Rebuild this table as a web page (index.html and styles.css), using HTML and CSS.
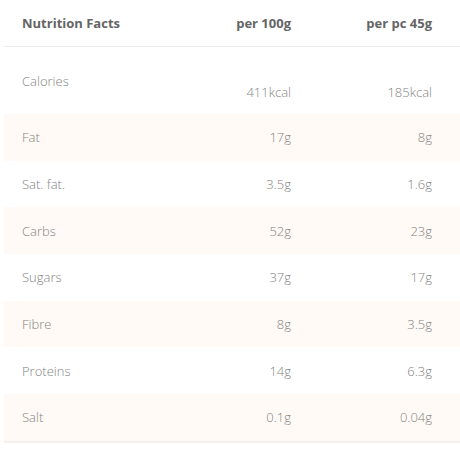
FILE: index.html
```html
<!DOCTYPE html>
<html>
<head>
<meta charset="utf-8">
<link rel="stylesheet" href="styles.css">
</head>
<body>
<div class="table">
  <div class="row head">
    <div class="label">Nutrition Facts</div>
    <div class="val">per 100g</div>
    <div class="val">per pc 45g</div>
  </div>
  <div class="row cal">
    <div class="label">Calories</div>
    <div class="val">411kcal</div>
    <div class="val">185kcal</div>
  </div>
  <div class="row alt"><div class="label">Fat</div><div class="val">17g</div><div class="val">8g</div></div>
  <div class="row"><div class="label">Sat. fat.</div><div class="val">3.5g</div><div class="val">1.6g</div></div>
  <div class="row alt"><div class="label">Carbs</div><div class="val">52g</div><div class="val">23g</div></div>
  <div class="row"><div class="label">Sugars</div><div class="val">37g</div><div class="val">17g</div></div>
  <div class="row alt"><div class="label">Fibre</div><div class="val">8g</div><div class="val">3.5g</div></div>
  <div class="row"><div class="label">Proteins</div><div class="val">14g</div><div class="val">6.3g</div></div>
  <div class="row alt last"><div class="label">Salt</div><div class="val">0.1g</div><div class="val">0.04g</div></div>
</div>
</body>
</html>
```
FILE: styles.css
```css
html, body {
  margin: 0;
  padding: 0;
  background: #ffffff;
}
body {
  font-family: "Open Sans", "Liberation Sans", sans-serif;
  font-size: 13px;
  color: #838383;
}
.table {
  margin-left: 4px;
  width: 456px;
}
.row {
  display: grid;
  grid-template-columns: 1fr 140px 141px;
  padding: 0 28px 0 18px;
  height: 46.7px;
  align-items: center;
}
.head {
  height: 46px;
  border-bottom: 1px solid #efede9;
  font-weight: 700;
  color: #656565;
}
.cal {
  height: 67px;
  align-items: start;
}
.cal .label {
  padding-top: 25px;
}
.cal .val {
  padding-top: 36px;
}
.label {
  font-weight: 300;
}
.head .label, .head .val {
  font-weight: 700;
}
.val {
  text-align: right;
  font-weight: 300;
}
.alt {
  background: #fffaf6;
}
.last {
  border-bottom: 2px solid #f3f1ee;
}
```
